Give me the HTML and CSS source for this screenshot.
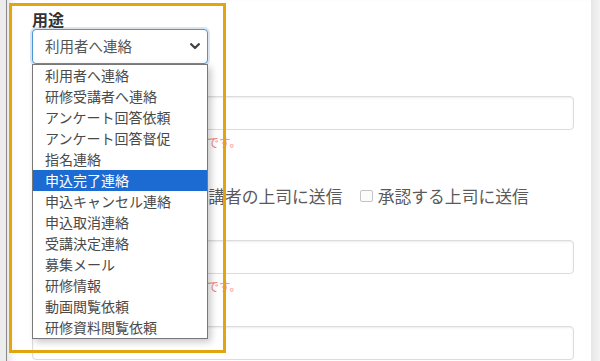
FILE: index.html
```html
<!DOCTYPE html>
<html lang="ja">
<head>
<meta charset="utf-8">
<title>用途</title>
<link rel="stylesheet" href="styles.css">
</head>
<body>
<div class="shell">
  <div class="rail"></div>
  <main class="panel">
    <form class="form">
      <div class="field-label">用途</div>
      <div class="select">
        <span class="select-value">利用者へ連絡</span>
        <svg class="chevron" width="10" height="7" viewBox="0 0 10 7"><polyline points="1.2,1.2 5,5 8.8,1.2" fill="none" stroke="#444" stroke-width="2.3" stroke-linecap="round" stroke-linejoin="round"/></svg>
      </div>

      <div class="group">
        <div class="field-label">件名</div>
        <div class="input"></div>
        <div class="help">この項目は必ず入力が必要な項目です。</div>
      </div>

      <div class="group group-check">
        <div class="field-label">送信先</div>
        <div class="checks">
          <label class="check"><span class="box"></span>受講者に送信</label>
          <label class="check"><span class="box"></span>受講者の上司に送信</label>
          <label class="check"><span class="box"></span>承認する上司に送信</label>
        </div>
      </div>

      <div class="group">
        <div class="field-label">本文</div>
        <div class="input"></div>
        <div class="help">この項目は必ず入力が必要な項目です。</div>
      </div>

      <div class="group">
        <div class="field-label">備考</div>
        <div class="input"></div>
      </div>
    </form>

    <ul class="menu">
      <li class="item">利用者へ連絡</li>
      <li class="item">研修受講者へ連絡</li>
      <li class="item">アンケート回答依頼</li>
      <li class="item">アンケート回答督促</li>
      <li class="item">指名連絡</li>
      <li class="item active">申込完了連絡</li>
      <li class="item">申込キャンセル連絡</li>
      <li class="item">申込取消連絡</li>
      <li class="item">受講決定連絡</li>
      <li class="item">募集メール</li>
      <li class="item">研修情報</li>
      <li class="item">動画閲覧依頼</li>
      <li class="item">研修資料閲覧依頼</li>
    </ul>
  </main>
  <div class="strip"></div>
  <div class="annotation"></div>
</div>
</body>
</html>
```

FILE: styles.css
```css
* { box-sizing: border-box; }
html, body {
  margin: 0;
  padding: 0;
  width: 600px;
  height: 361px;
  overflow: hidden;
  background: #efefef;
  font-family: "Noto Sans CJK JP", "Noto Sans", sans-serif;
}
.shell {
  position: relative;
  display: flex;
  height: 361px;
}
.rail {
  width: 7px;
  background: #ececec;
  border-right: 1px solid #8a8a8a;
}
.panel {
  position: relative;
  flex: 1;
  background: #fff;
  box-shadow: inset 8px 0 8px -6px rgba(0, 0, 0, 0.14);
  overflow: hidden;
}
.strip {
  width: 9px;
  background: linear-gradient(to right, #e6e6e6, #f3f3f3);
}
.form {
  padding: 8.5px 17px 0 25px;
}
.field-label {
  font-size: 16px;
  font-weight: bold;
  line-height: 20px;
  color: #333;
}
.select {
  display: flex;
  align-items: center;
  justify-content: space-between;
  width: 176px;
  height: 35px;
  border: 1px solid #4a97d8;
  border-radius: 4px;
  box-shadow: 0 0 0 2px rgba(175, 195, 215, 0.45);
  padding: 0 7px 1px 12px;
  background: #fff;
}
.select-value {
  font-size: 14.5px;
  color: #555;
  line-height: 20px;
}
.chevron { display: block; margin-top: 1px; }
.group { margin-top: 8px; }
.group .field-label { margin-bottom: 4px; }
.group-check { margin-top: 10px; }
.input {
  height: 34px;
  border: 1px solid #dcdcdc;
  border-radius: 4px;
  box-shadow: inset 0 1px 2px rgba(0, 0, 0, 0.08);
}
.help {
  margin-top: 4px;
  font-size: 11.7px;
  line-height: 16px;
  color: #ef8883;
  white-space: nowrap;
}
.checks {
  display: flex;
  align-items: center;
  gap: 17.3px;
  height: 24px;
  padding-left: 5.4px;
  white-space: nowrap;
}
.check {
  display: flex;
  align-items: center;
  gap: 5px;
  font-size: 16.8px;
  line-height: 24px;
  color: #5a5a5a;
}
.box {
  display: block;
  width: 13px;
  height: 12px;
  border: 1px solid #c4c4c4;
  border-radius: 2px;
  background: #fbfbfb;
}
.menu {
  position: absolute;
  left: 25px;
  top: 64px;
  width: 176px;
  margin: 0;
  padding: 0;
  list-style: none;
  background: #fff;
  border: 1px solid #787878;
  box-shadow: 3px 3px 7px rgba(0, 0, 0, 0.22);
}
.item {
  height: 21px;
  line-height: 21px;
  padding-left: 12px;
  font-size: 14px;
  color: #4a4a4a;
  white-space: nowrap;
}
.item.active {
  background: #1b6bd3;
  color: #fff;
}
.annotation {
  position: absolute;
  left: 9px;
  top: 3px;
  width: 217px;
  height: 350px;
  border: 3px solid #e2a50e;
  pointer-events: none;
}
```
